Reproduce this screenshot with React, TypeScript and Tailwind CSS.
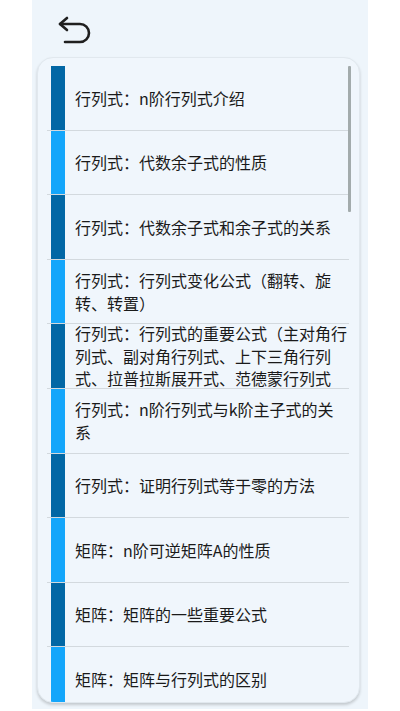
import React from "react";

const items = [
  "行列式：n阶行列式介绍",
  "行列式：代数余子式的性质",
  "行列式：代数余子式和余子式的关系",
  "行列式：行列式变化公式（翻转、旋转、转置）",
  "行列式：行列式的重要公式（主对角行列式、副对角行列式、上下三角行列式、拉普拉斯展开式、范德蒙行列式",
  "行列式：n阶行列式与k阶主子式的关系",
  "行列式：证明行列式等于零的方法",
  "矩阵：n阶可逆矩阵A的性质",
  "矩阵：矩阵的一些重要公式",
  "矩阵：矩阵与行列式的区别",
];

const BackIcon = () => (
  <svg width="34" height="30" viewBox="0 0 34 30" fill="none" stroke="#1f1f1f" strokeWidth="2.6" strokeLinecap="round" strokeLinejoin="round">
    <path d="M10 2 L3 8 L10 14" />
    <path d="M3 8 H23 a9 9 0 0 1 0 18 H8" />
  </svg>
);

export default function App() {
  return (
    <div className="w-[400px] h-[711px] bg-white flex justify-center overflow-hidden" style={{ fontFamily: '"Noto Sans CJK SC", "Noto Sans", sans-serif' }}>
      <div className="w-[336px] h-[709px] bg-[#eef5fb] flex flex-col">
        <div className="h-[57px] pl-[25px] pt-[16px] shrink-0">
          <BackIcon />
        </div>
        <div className="relative ml-[5px] w-[323px] h-[646px] rounded-[16px] bg-[#f0f6fc] border border-[#e1e8ee] shadow-[0_2px_3px_rgba(0,0,0,0.18)] overflow-hidden">
          <div className="pt-[8px] pl-[9px] pr-[10px] h-full overflow-hidden">
            {items.map((t, i) => (
              <div key={i} className="h-[64.6px] flex items-stretch border-b border-[#d3d9de]">
                <div className={`ml-[4px] w-[14px] shrink-0 ${i % 2 === 0 ? "bg-[#0267a5]" : "bg-[#14a6fb]"}`} />
                <div className="flex-1 flex items-center pl-[10px] pr-[2px] text-[16px] leading-[22.5px] text-[#1a1a1a]">
                  <span className="block">{t}</span>
                </div>
              </div>
            ))}
          </div>
          <div className="absolute left-[310px] top-[8px] w-[3px] h-[146px] bg-[#a3abac] rounded-[1px]" />
        </div>
      </div>
    </div>
  );
}
